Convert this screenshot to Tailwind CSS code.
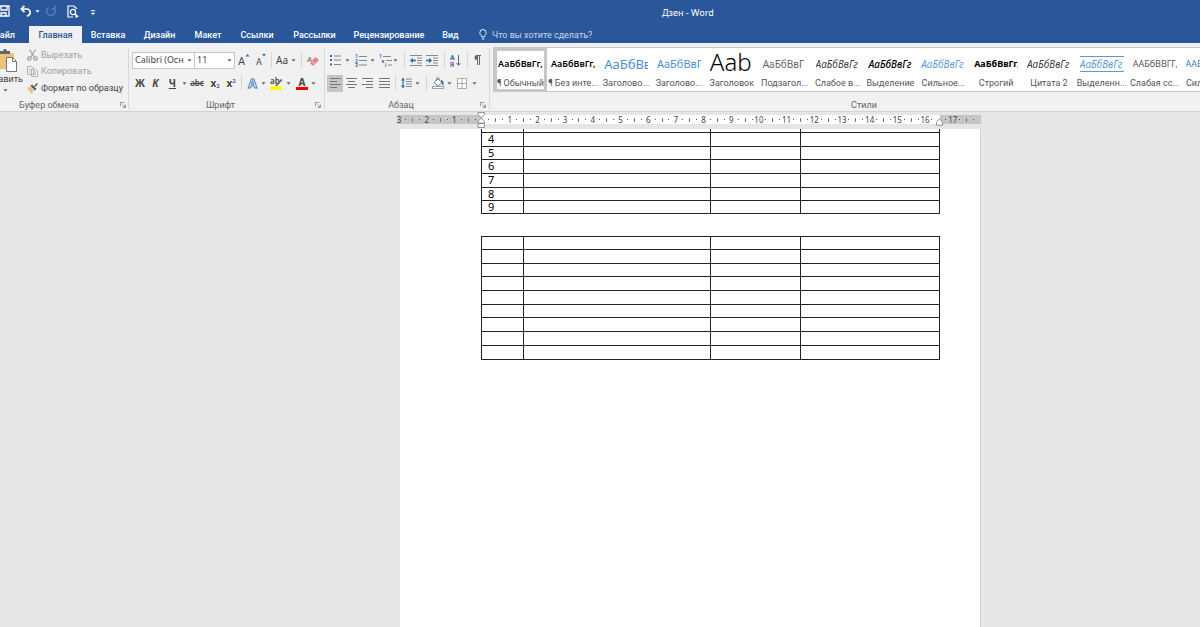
<!DOCTYPE html>
<html lang="ru">
<head>
<meta charset="utf-8">
<title>Дзен - Word</title>
<script src="https://cdn.jsdelivr.net/npm/@tailwindcss/browser@4"></script>
</head>
<body class="min-h-screen overflow-hidden bg-[#e6e6e6] font-[Roboto,'Noto_Sans',sans-serif] text-[8px] leading-3 text-[#444]">
<svg class="hidden">
  <symbol id="caret" viewBox="0 0 5 3"><path d="M.5 .3h4L2.500 2.700z" fill="#666"/></symbol>
  <symbol id="launch" viewBox="0 0 7 7"><path d="M.5 5V.5H5M3 3l3 3M6.300 3v3.300H3" fill="none" stroke="#777" stroke-width=".9"/></symbol>
</svg>

<header class="bg-[#2a579a] text-white">
  <div class="flex h-[26px] items-center whitespace-nowrap">
    <div class="flex w-[108px] shrink-0 items-center pb-1">
      <button aria-label="Сохранить" class="w-[20px]"><svg class="h-3 w-[10px]" viewBox="0 0 10 12" fill="none" stroke="#fff" stroke-width="1.300"><path d="M-1 1h10v10h-10M1 1v4h6V1M1 11V8h5v3"/></svg></button>
      <button aria-label="Отменить" class="flex w-[25px] items-center gap-[3px]"><svg class="h-3 w-3" viewBox="0 0 12 12" fill="none" stroke="#fff" stroke-width="1.700"><path d="M4.500 .8L1.300 4l3.200 3.200M1.500 4h5.200a3.500 3.500 0 0 1 0 7"/></svg><svg class="h-[3px] w-[5px]" viewBox="0 0 5 3"><path d="M.5 .3h4L2.500 2.700z" fill="#fff"/></svg></button>
      <button aria-label="Повторить" class="w-[22px]"><svg class="h-3 w-3" viewBox="0 0 12 12" fill="none" stroke="#6284b8" stroke-width="1.300"><path d="M3.500 2.500A4.300 4.300 0 1 0 9 3.200M6.500 3.800h3.300V.5"/></svg></button>
      <button aria-label="Предварительный просмотр" class="w-[23px]"><svg class="h-[13px] w-3" viewBox="0 0 12 13" fill="none" stroke="#fff" stroke-width="1.200"><path d="M6 12H1V1h6l2.500 2.500V4M9.500 11v1H8"/><circle cx="6" cy="7" r="2.600"/><path d="M8 9l3 3" stroke-width="1.700"/></svg></button>
      <button aria-label="Настройка панели" class="pt-1"><svg class="h-[6px] w-[6px]" viewBox="0 0 6 6"><path d="M1 .7h4" stroke="#fff"/><path d="M.7 2.700h4.600L3 5z" fill="#fff"/></svg></button>
    </div>
    <h1 class="ml-[554px] font-['Noto_Sans'] text-[9px]">Дзен - Word</h1>
  </div>
  <nav class="flex h-[17px] items-center whitespace-nowrap text-[9px] font-medium">
    <a href="#" class="flex w-[29px] justify-end pr-[14px]">Файл</a>
    <a href="#" class="flex h-[17px] w-[53px] items-center justify-center bg-[#f1f1f1] text-[#2a579a]">Главная</a>
    <a href="#" class="w-[52px] text-center">Вставка</a>
    <a href="#" class="w-[51px] text-center">Дизайн</a>
    <a href="#" class="w-[46px] text-center">Макет</a>
    <a href="#" class="w-[52px] text-center">Ссылки</a>
    <a href="#" class="w-[63px] text-center">Рассылки</a>
    <a href="#" class="w-[86px] text-center">Рецензирование</a>
    <a href="#" class="w-[37px] text-center">Вид</a>
    <button class="flex items-center gap-[5px] pl-[10px] font-normal text-[#c9d6e9]"><svg class="h-[11px] w-[8px]" viewBox="0 0 8 11" fill="none" stroke="#fff" stroke-width=".9"><path d="M2.700 8V7C1.500 6 .8 5 .8 3.700a3.200 3.200 0 0 1 6.400 0C7.200 5 6.500 6 5.300 7v1zM2.700 10h2.600"/></svg>Что вы хотите сделать?</button>
  </nav>
</header>

<section aria-label="Лента" class="flex h-[69px] overflow-hidden border-b border-[#d2d2d2] bg-[#f1f1f1] pt-1 whitespace-nowrap">
  <!-- Clipboard -->
  <div class="my-px flex h-[61px] w-[129px] shrink-0 flex-col border-r border-[#d8d8d8]">
    <div class="flex h-[50px] shrink-0">
      <button class="flex w-[27px] flex-col items-end pr-1">
        <svg class="mt-px mr-[5px] h-[24px] w-[19px] shrink-0" viewBox="0 0 19 24"><path d="M-2 4h17v16H-2z" fill="#ecc27c"/><path d="M1 4V2h3l1-2h2l1 2h3v3H1z" fill="#666"/><path d="M7.500 8.500h6l4 4v10h-10z" fill="#fff" stroke="#777"/><path d="M13.500 8.500v4h4" fill="none" stroke="#777"/></svg>
        <span class="text-[9px]">Вставить</span>
        <svg class="mr-[15px] mt-1 h-[3px] w-[5px] shrink-0"><use href="#caret"/></svg>
      </button>
      <div class="flex flex-col text-[9px]">
        <button class="flex h-[14px] items-center gap-[3px] text-[#a0a0a0]"><svg class="h-3 w-[11px]" viewBox="0 0 11 12" fill="none" stroke="#a0a0a0" stroke-width="1.200"><path d="M2.500 .5l5 8M8.500 .5l-5 8"/><circle cx="2.400" cy="9.500" r="1.700"/><circle cx="8.600" cy="9.500" r="1.700"/></svg>Вырезать</button>
        <button class="flex h-[18px] items-center gap-[3px] text-[#a0a0a0]"><svg class="h-[11px] w-[11px]" viewBox="0 0 11 11" fill="#f1f1f1" stroke="#b0a8b0" stroke-width=".9"><path d="M.5 .5h4l2 2v6h-6zM4.500 3h4l2 2v5.500h-6z"/><path d="M6 6h3M6 8h3M2 4h1.500M2 6h1.500"/></svg>Копировать</button>
        <button class="flex h-[16px] items-center gap-[3px]"><svg class="h-[11px] w-[11px]" viewBox="0 0 11 11"><path d="M0 5l3-1.500 4 4L4.500 11z" fill="#ecc27c"/><path d="M3.500 3L5 1.500l4.500 4.500L8 7.500zM7 3l3-3 1 1-3 3z" fill="#555"/></svg>Формат по образцу</button>
      </div>
    </div>
    <div class="mt-[1px] flex items-center text-[#666]"><span class="w-[98px] text-center text-[9px]">Буфер обмена</span><button aria-label="Параметры буфера обмена" class="ml-auto mr-[2px]"><svg class="h-[6px] w-[6px]"><use href="#launch"/></svg></button></div>
  </div>

  <!-- Font -->
  <div class="my-px flex h-[61px] w-[196px] shrink-0 flex-col border-r border-[#d8d8d8]">
    <div class="flex h-[24px] shrink-0 items-center pl-[3px]">
      <div class="relative"><select aria-label="Шрифт" class="h-[17px] w-[63px] appearance-none overflow-hidden border border-[#c8c8c8] bg-white pr-[10px] pl-[2px] font-['Noto_Sans'] text-[9px]"><option>Calibri (Основной текст)</option></select><svg class="pointer-events-none absolute top-[7px] right-[3px] h-[3px] w-[5px]"><use href="#caret"/></svg></div>
      <div class="relative"><select aria-label="Размер шрифта" class="h-[17px] w-[40px] appearance-none border border-l-0 border-[#c8c8c8] bg-white pl-[2px] font-['Noto_Sans'] text-[9px]"><option>11</option></select><svg class="pointer-events-none absolute top-[7px] right-[3px] h-[3px] w-[5px]"><use href="#caret"/></svg></div>
      <button aria-label="Увеличить размер" class="w-[18px]"><svg class="mx-auto h-[14px] w-3" viewBox="0 0 12 14"><text x="0" y="12" font-size="11" fill="#444">A</text><path d="M7.500 3.500l2-2.500 2 2.500z" fill="#2a6db5"/></svg></button>
      <button aria-label="Уменьшить размер" class="w-[16px]"><svg class="mx-auto h-[14px] w-3" viewBox="0 0 12 14"><text x="1" y="12" font-size="9" fill="#444">A</text><path d="M7 1l2 2.500L11 1z" fill="#2a6db5"/></svg></button>
      <span class="ml-[2px] h-4 w-px bg-[#d5d5d5]"></span>
      <button aria-label="Регистр" class="ml-1 flex w-[24px] items-center gap-[3px] font-['Noto_Sans'] text-[10px]">Aa<svg class="h-[3px] w-[5px]"><use href="#caret"/></svg></button>
      <span class="ml-[1px] h-4 w-px bg-[#d5d5d5]"></span>
      <button aria-label="Очистить формат" class="ml-[5px]"><svg class="h-3 w-3" viewBox="0 0 12 12"><text x="0" y="8" font-size="8" fill="#555">A</text><path d="M3 8.500L8.500 3l3.500 3L6.500 11.500H5z" fill="#e8808f"/><path d="M4.500 7L8 10.500" stroke="#f9d5da"/></svg></button>
    </div>
    <div class="flex h-[22px] shrink-0 items-center pl-[3px] font-['Noto_Sans'] text-[10px]">
      <button class="w-4 font-bold">Ж</button>
      <button class="w-[15px] font-bold italic">К</button>
      <button class="flex w-[24px] items-center justify-end gap-[6px] font-bold"><span class="underline">Ч</span><svg class="h-[3px] w-[5px]"><use href="#caret"/></svg></button>
      <button class="w-[20px] text-[8px] font-semibold line-through">abc</button>
      <button class="flex w-4 items-center justify-center font-bold" aria-label="Подстрочный">x<span class="pt-[5px] text-[6px] leading-[6px] text-[#2a6db5]">2</span></button>
      <button class="flex w-4 items-center justify-center font-bold" aria-label="Надстрочный">x<span class="pb-[5px] text-[6px] leading-[6px] text-[#2a6db5]">2</span></button>
      <span class="ml-[2px] h-4 w-px bg-[#d5d5d5]"></span>
      <button aria-label="Эффекты" class="ml-1 flex w-[24px] items-center gap-[3px]"><svg class="h-3 w-3" viewBox="0 0 12 12"><text x="2" y="10.500" font-size="13" font-weight="bold" fill="#fff" stroke="#3f7fc4" stroke-width=".9">A</text></svg><svg class="h-[3px] w-[5px]"><use href="#caret"/></svg></button>
      <button aria-label="Цвет выделения" class="flex w-[26px] items-center gap-[3px]"><svg class="h-[13px] w-[13px]" viewBox="0 0 13 13"><text x="0" y="7" font-size="8" font-weight="600" fill="#444">ab</text><path d="M5 9l6-7 1.500 1L7 9z" fill="#666"/><path d="M0 9.500h12V13H0z" fill="#ff0"/></svg><svg class="h-[3px] w-[5px]"><use href="#caret"/></svg></button>
      <button aria-label="Цвет текста" class="flex items-center gap-[3px]"><svg class="h-[13px] w-3" viewBox="0 0 12 13"><text x="2.500" y="9" font-size="10" font-weight="bold" fill="#444">A</text><path d="M0 10h12v3H0z" fill="#f00000"/></svg><svg class="h-[3px] w-[5px]"><use href="#caret"/></svg></button>
    </div>
    <div class="mt-[5px] flex items-center text-[#666]"><span class="w-[183px] text-center text-[9px]">Шрифт</span><button aria-label="Параметры шрифта" class="ml-auto mr-[3px]"><svg class="h-[6px] w-[6px]"><use href="#launch"/></svg></button></div>
  </div>

  <!-- Paragraph -->
  <div class="my-px flex h-[61px] w-[165px] shrink-0 flex-col border-r border-[#d8d8d8]">
    <div class="flex h-[24px] shrink-0 items-center pl-[5px]">
      <button aria-label="Маркеры" class="flex w-[25px] items-center gap-1"><svg class="h-3 w-[11px]" viewBox="0 0 11 12"><path d="M0 1h2v2H0zM0 5h2v2H0zM0 9.500h2v2H0z" fill="#2a6db5"/><path d="M4 2h7M4 6h7M4 10.500h7" stroke="#888"/></svg><svg class="h-[3px] w-[5px]"><use href="#caret"/></svg></button>
      <button aria-label="Нумерация" class="flex w-[24px] items-center gap-[3px]"><svg class="h-[13px] w-3" viewBox="0 0 12 13"><g font-size="5" font-weight="bold" fill="#2a6db5"><text x="0" y="4">1</text><text x="0" y="8.500">2</text><text x="0" y="13">3</text></g><path d="M4 2.500h8M4 6.500h8M4 11h8" stroke="#888"/></svg><svg class="h-[3px] w-[5px]"><use href="#caret"/></svg></button>
      <button aria-label="Многоуровневый список" class="flex w-[25px] items-center gap-[1px]"><svg class="h-[13px] w-[13px]" viewBox="0 0 13 13"><g font-size="5" font-weight="bold" fill="#2a6db5"><text x="0" y="4">1</text><text x="2.500" y="8.500">a</text><text x="6" y="13">i</text></g><path d="M4 2.500h8M7 6.500h6M9 11h4" stroke="#888"/></svg><svg class="h-[3px] w-[5px]"><use href="#caret"/></svg></button>
      <span class="h-4 w-px bg-[#d5d5d5]"></span>
      <button aria-label="Уменьшить отступ" class="ml-[5px] w-4"><svg class="h-[11px] w-3" viewBox="0 0 12 11"><path d="M0 .5h12M7 3h5M7 5.500h5M7 8h5M0 10.500h12" stroke="#888"/><path d="M0 5.500L3 2.700V4.700h3v1.600H3v2z" fill="#2a6db5"/></svg></button>
      <button aria-label="Увеличить отступ" class="w-[18px]"><svg class="h-[11px] w-3" viewBox="0 0 12 11"><path d="M0 .5h12M7 3h5M7 5.500h5M7 8h5M0 10.500h12" stroke="#888"/><path d="M6 5.500L3 2.700V4.700H0v1.600h3v2z" fill="#2a6db5"/></svg></button>
      <span class="h-4 w-px bg-[#d5d5d5]"></span>
      <button aria-label="Сортировка" class="ml-[5px] w-[17px]"><svg class="h-[13px] w-[11px]" viewBox="0 0 11 13"><text x="0" y="6" font-size="7" font-weight="bold" fill="#2a6db5">А</text><text x="0" y="13" font-size="7" font-weight="bold" fill="#9050a8">Я</text><path d="M8.500 1v10M6.500 9l2 2.300 2-2.300" stroke="#666" fill="none"/></svg></button>
      <span class="h-4 w-px bg-[#d5d5d5]"></span>
      <button aria-label="Отобразить все знаки" class="ml-[5px]"><svg class="h-[10px] w-2" viewBox="0 0 8 10"><path d="M4 0h4v1H7v9H6V1H5v9H4V5a2.500 2.500 0 0 1 0-5z" fill="#666"/></svg></button>
    </div>
    <div class="flex h-[22px] shrink-0 items-center pl-[2px]">
      <button aria-label="По левому краю" class="flex h-[17px] w-4 items-center justify-center bg-[#c6c6c6]"><svg class="h-[10px] w-[11px]" viewBox="0 0 11 10"><path d="M0 .5h11M0 3.500h7M0 6.500h11M0 9.500h7" stroke="#777"/></svg></button>
      <button aria-label="По центру" class="flex w-4 justify-center"><svg class="h-[10px] w-[11px]" viewBox="0 0 11 10"><path d="M0 .5h11M2 3.500h7M0 6.500h11M2 9.500h7" stroke="#777"/></svg></button>
      <button aria-label="По правому краю" class="flex w-[17px] justify-center"><svg class="h-[10px] w-[11px]" viewBox="0 0 11 10"><path d="M0 .5h11M4 3.500h7M0 6.500h11M4 9.500h7" stroke="#777"/></svg></button>
      <button aria-label="По ширине" class="flex w-4 justify-center"><svg class="h-[10px] w-[11px]" viewBox="0 0 11 10"><path d="M0 .5h11M0 3.500h11M0 6.500h11M0 9.500h11" stroke="#777"/></svg></button>
      <span class="ml-[3px] h-4 w-px bg-[#d5d5d5]"></span>
      <button aria-label="Интервал" class="ml-[5px] flex w-[25px] items-center gap-[3px]"><svg class="h-3 w-[11px]" viewBox="0 0 11 12"><path d="M5 2h6M5 4.500h6M5 7h6M5 9.500h6" stroke="#888"/><path d="M0 3.500L2 .5l2 3H2.600v5H4l-2 3-2-3h1.400v-5z" fill="#2a6db5"/></svg><svg class="h-[3px] w-[5px]"><use href="#caret"/></svg></button>
      <span class="h-4 w-px bg-[#d5d5d5]"></span>
      <button aria-label="Заливка" class="ml-[5px] flex w-[25px] items-center gap-[3px]"><svg class="h-3 w-3" viewBox="0 0 12 12"><path d="M2 5.500L6 2l4 3.500-4 3.500z" fill="#fff" stroke="#777" stroke-width=".9"/><path d="M4.500 4V1.500a1.300 1.300 0 0 1 2.500 0V3" fill="none" stroke="#777" stroke-width=".9"/><path d="M9 3c2 0 3 2 2.500 6C10 8 10 6 9 5z" fill="#2a6db5"/><path d="M.5 9.500h11v2H.5z" fill="#fff" stroke="#888" stroke-width=".8"/></svg><svg class="h-[3px] w-[5px]"><use href="#caret"/></svg></button>
      <button aria-label="Границы" class="flex items-center gap-[5px]"><svg class="h-[11px] w-[10px]" viewBox="0 0 10 11"><path d="M.5 .5h9v10h-9zM5 .5v10M.5 5.500h9" fill="#fff" stroke="#aaa"/></svg><svg class="h-[3px] w-[5px]"><use href="#caret"/></svg></button>
    </div>
    <div class="mt-[5px] flex items-center text-[#666]"><span class="w-[152px] text-center text-[9px]">Абзац</span><button aria-label="Параметры абзаца" class="ml-auto mr-[3px]"><svg class="h-[6px] w-[6px]"><use href="#launch"/></svg></button></div>
  </div>

  <!-- Styles gallery -->
  <div class="ml-[3px] min-w-0 flex-1 overflow-hidden">
    <div class="grid h-[45px] w-[742px] grid-cols-14 border border-[#c6c6c6] bg-white text-[9px] text-[#555] [&_span:first-child]:font-['Noto_Sans']">
      <button class="flex min-w-0 flex-col items-center border-3 border-[#c6c6c6]"><span class="flex h-[26px] items-center text-[9px] font-semibold text-black">АаБбВвГг,</span><span>¶ Обычный</span></button>
      <button class="flex min-w-0 flex-col items-center pt-[3px]"><span class="flex h-[26px] items-center text-[9px] font-semibold text-black">АаБбВвГг,</span><span>¶ Без инте...</span></button>
      <button class="flex min-w-0 flex-col items-center pt-[3px]"><span class="flex h-[26px] w-[44px] items-center overflow-hidden text-[13px] text-[#4a8fd0]">АаБбВв</span><span>Заголово...</span></button>
      <button class="flex min-w-0 flex-col items-center pt-[3px]"><span class="flex h-[26px] w-[44px] items-center overflow-hidden text-[11px] text-[#4a8fd0]">АаБбВвГ</span><span>Заголово...</span></button>
      <button class="flex min-w-0 flex-col items-center pt-[3px]"><span class="flex h-[26px] w-[44px] items-center overflow-hidden pb-1 text-[24px] leading-6 font-light text-black">Ааb</span><span>Заголовок</span></button>
      <button class="flex min-w-0 flex-col items-center pt-[3px]"><span class="flex h-[26px] w-[44px] items-center overflow-hidden text-[10px] text-[#666]">АаБбВвГ</span><span>Подзагол...</span></button>
      <button class="flex min-w-0 flex-col items-center pt-[3px]"><span class="flex h-[26px] w-[44px] items-center overflow-hidden text-[10px] italic text-[#404040]">АаБбВвГг</span><span>Слабое в...</span></button>
      <button class="flex min-w-0 flex-col items-center pt-[3px]"><span class="flex h-[26px] w-[44px] items-center overflow-hidden text-[10px] font-medium italic text-black">АаБбВвГг</span><span>Выделение</span></button>
      <button class="flex min-w-0 flex-col items-center pt-[3px]"><span class="flex h-[26px] w-[44px] items-center overflow-hidden text-[10px] italic text-[#5b9bd5]">АаБбВвГг</span><span>Сильное...</span></button>
      <button class="flex min-w-0 flex-col items-center pt-[3px]"><span class="flex h-[26px] w-[44px] items-center overflow-hidden text-[9px] font-bold text-black">АаБбВвГг,</span><span>Строгий</span></button>
      <button class="flex min-w-0 flex-col items-center pt-[3px]"><span class="flex h-[26px] w-[44px] items-center overflow-hidden text-[10px] italic text-[#404040]">АаБбВвГг</span><span>Цитата 2</span></button>
      <button class="flex min-w-0 flex-col items-center pt-[3px]"><span class="my-[5px] flex h-4 w-[44px] items-center overflow-hidden border-y border-[#5b9bd5] text-[10px] italic text-[#5b9bd5]">АаБбВвГг</span><span>Выделенн...</span></button>
      <button class="flex min-w-0 flex-col items-center pt-[3px]"><span class="flex h-[26px] w-[44px] items-center overflow-hidden text-[9px] text-[#5a5a5a]">ААБбВВГГ,</span><span>Слабая сс...</span></button>
      <button class="flex min-w-0 flex-col items-center pt-[3px]"><span class="flex h-[26px] w-[44px] items-center overflow-hidden text-[9px] text-[#3a80c8]">ААБбВВГГ,</span><span>Сильная...</span></button>
    </div>
    <div class="mt-[7px] w-[742px] text-center text-[9px] text-[#666]">Стили</div>
  </div>
</section>

<main class="pl-[397px] font-['Noto_Sans']">
  <div class="relative mt-[3px] h-[9px] w-[584px]">
    <div class="flex h-full"><span class="w-[84px] bg-[#c6c6c6]"></span><span class="flex-1 bg-white"></span><span class="w-[41px] bg-[#c6c6c6]"></span></div>
    <div id="ruler" class="absolute inset-y-0 right-[7px] left-[2px] flex items-center justify-between text-[8px] leading-[9px]"></div>
    <svg class="absolute -top-[3px] left-[80px] h-4 w-[9px]" viewBox="0 0 9 16" fill="#fff" stroke="#888" stroke-width=".9"><path d="M1 .5h6.500v2L4.500 6 1 2.500zM4.500 6L7.500 9.500v1.500H1V9.500zM1 11.500h6.500v4H1z"/></svg>
    <svg class="absolute top-[3px] left-[539px] h-[8px] w-[7px]" viewBox="0 0 7 8" fill="#fff" stroke="#888" stroke-width=".9"><path d="M3.500 .7l3 3.500v3h-6v-3z"/></svg>
  </div>
  <article class="ml-[3px] mt-[5px] h-[498px] w-[581px] border-r border-[#d0d0d0] bg-white pl-[81px] text-[11px] text-black">
    <table class="w-[459px] table-fixed border-collapse leading-3 [&_td]:border [&_td]:border-[#222] [&_td]:p-0 [&_td:first-child]:pl-[6px]">
      <colgroup><col class="w-[42px]"><col class="w-[187px]"><col class="w-[90px]"><col></colgroup>
      <tbody>
        <tr class="h-[3px] [&_td]:border-t-0"><td></td><td></td><td></td><td></td></tr>
        <tr class="h-[14px]"><td>4</td><td></td><td></td><td></td></tr>
        <tr class="h-[13px]"><td>5</td><td></td><td></td><td></td></tr>
        <tr class="h-[14px]"><td>6</td><td></td><td></td><td></td></tr>
        <tr class="h-[14px]"><td>7</td><td></td><td></td><td></td></tr>
        <tr class="h-[13px]"><td>8</td><td></td><td></td><td></td></tr>
        <tr class="h-[13px]"><td>9</td><td></td><td></td><td></td></tr>
      </tbody>
    </table>
    <table class="mt-[22px] h-[124px] w-[459px] table-fixed border-collapse [&_td]:border [&_td]:border-[#222] [&_td]:p-0">
      <colgroup><col class="w-[42px]"><col class="w-[187px]"><col class="w-[90px]"><col></colgroup>
      <tbody>
        <tr><td></td><td></td><td></td><td></td></tr>
        <tr><td></td><td></td><td></td><td></td></tr>
        <tr><td></td><td></td><td></td><td></td></tr>
        <tr><td></td><td></td><td></td><td></td></tr>
        <tr><td></td><td></td><td></td><td></td></tr>
        <tr><td></td><td></td><td></td><td></td></tr>
        <tr><td></td><td></td><td></td><td></td></tr>
        <tr><td></td><td></td><td></td><td></td></tr>
        <tr><td></td><td></td><td></td><td></td></tr>
      </tbody>
    </table>
  </article>
</main>
<script>
  // One mark per quarter of a centimetre, from -3 cm to 17.75 cm
  const ruler = document.getElementById('ruler');
  for (let q = -12; q <= 71; q++) {
    let mark = '<i class="h-px w-px shrink-0 bg-[#555]"></i>';
    if (q === 0 || q === 66) mark = '';
    else if (q % 4 === 0) mark = '<span>' + Math.abs(q / 4) + '</span>';
    else if (q % 2 === 0) mark = '<i class="h-1 w-px shrink-0 bg-[#777]"></i>';
    ruler.insertAdjacentHTML('beforeend', '<span class="flex w-0 items-center justify-center">' + mark + '</span>');
  }
</script>
</body>
</html>
